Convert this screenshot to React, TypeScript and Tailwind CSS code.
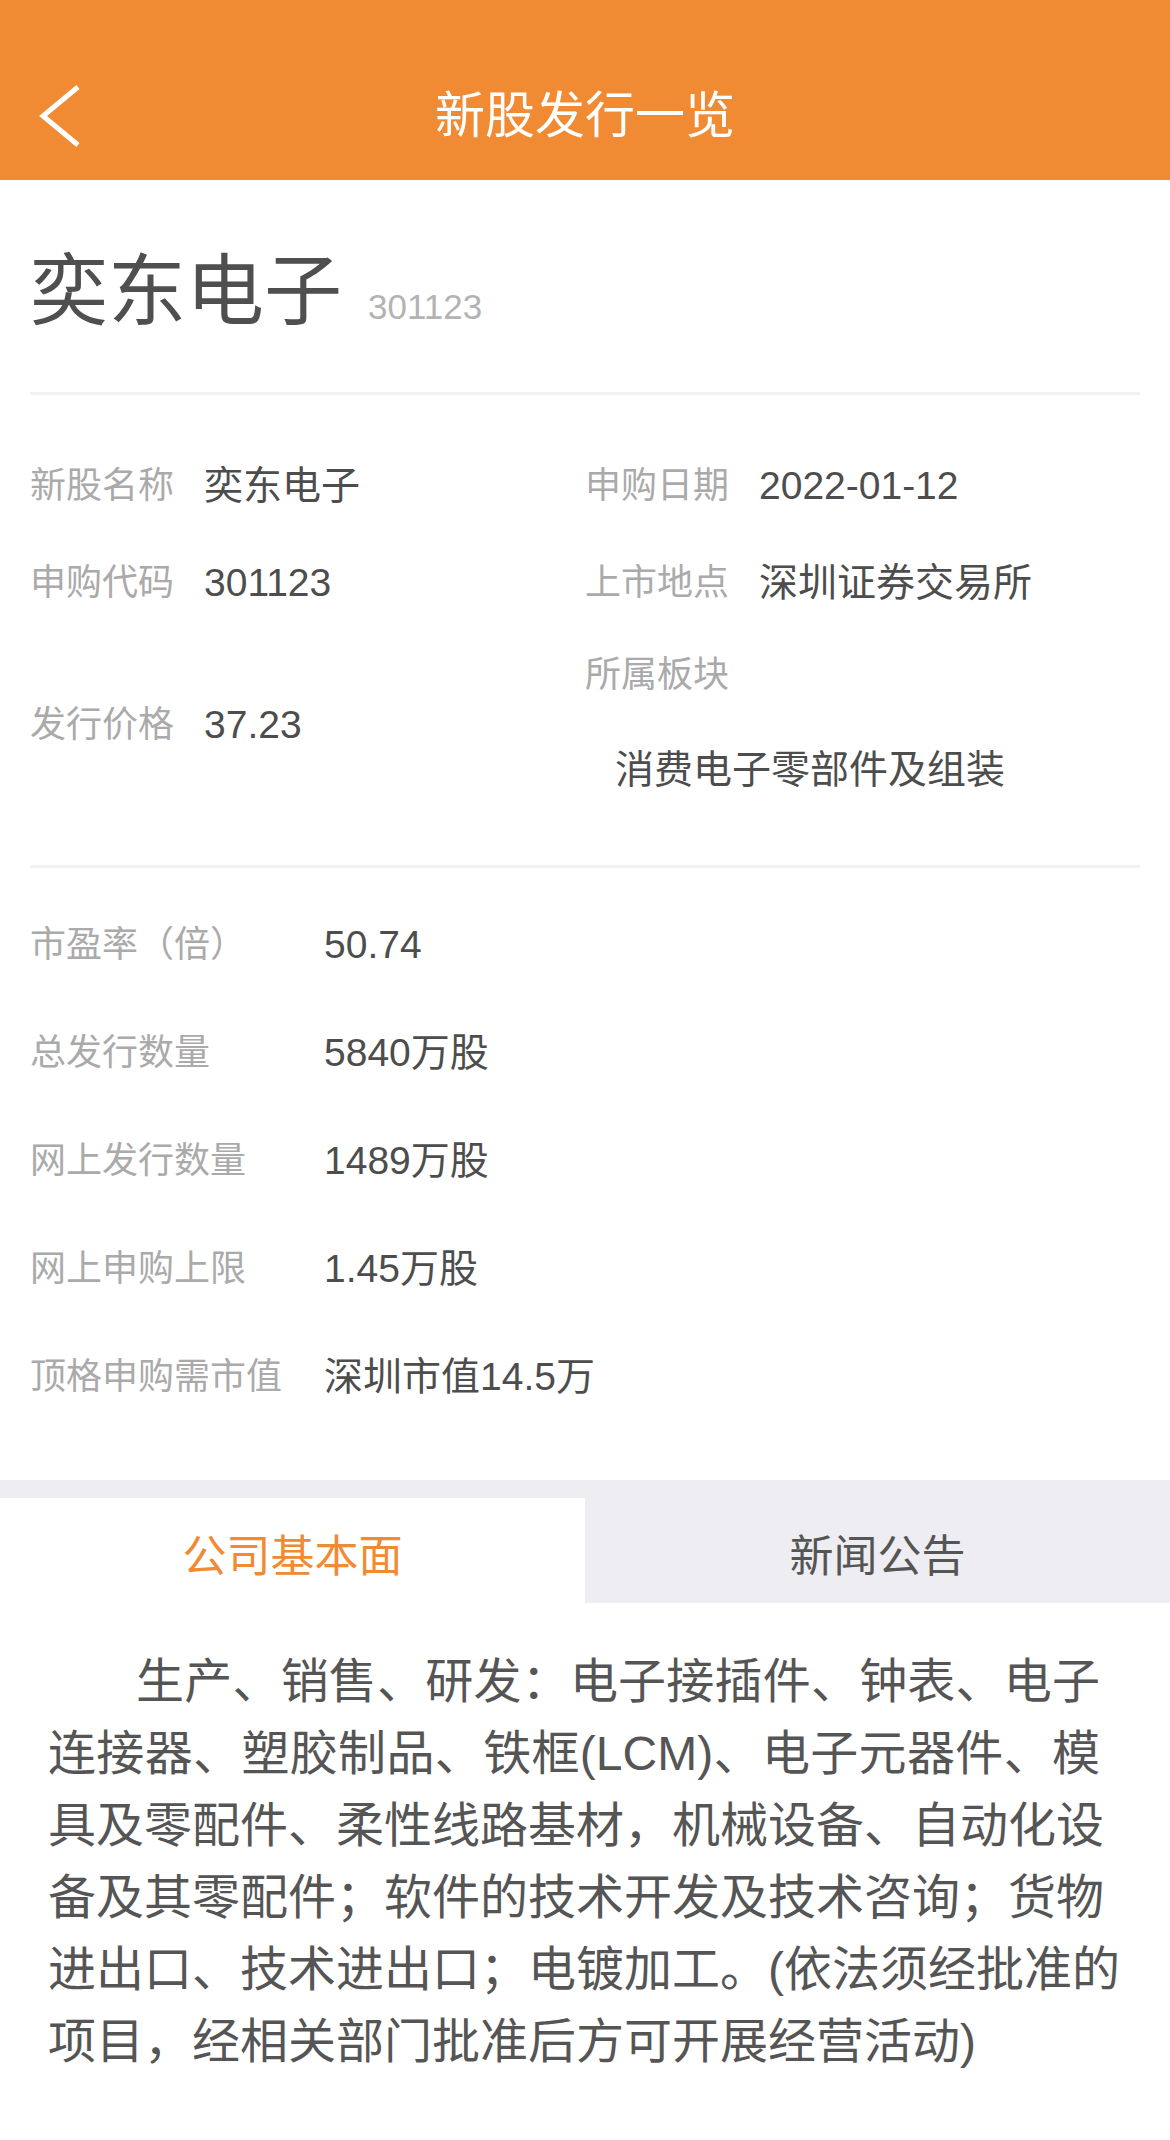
import React from "react";

const FONT = { fontFamily: '"Liberation Sans", "Noto Sans CJK SC", sans-serif' };

function Row({ label, value }: { label: string; value: string }) {
  return (
    <div className="flex h-[97px] items-center">
      <div className="w-[174px] shrink-0 text-[36px] leading-[40px] text-[#aaaaaa]">{label}</div>
      <div className="text-[39px] leading-[40px] text-[#4d4d4d]">{value}</div>
    </div>
  );
}

function StatRow({ label, value }: { label: string; value: string }) {
  return (
    <div className="flex h-[108px] items-center">
      <div className="w-[294px] shrink-0 text-[36px] leading-[40px] text-[#aaaaaa]">{label}</div>
      <div className="text-[39px] leading-[40px] text-[#4d4d4d]">{value}</div>
    </div>
  );
}

const lines = [
  "生产、销售、研发：电子接插件、钟表、电子",
  "连接器、塑胶制品、铁框(LCM)、电子元器件、模",
  "具及零配件、柔性线路基材，机械设备、自动化设",
  "备及其零配件；软件的技术开发及技术咨询；货物",
  "进出口、技术进出口；电镀加工。(依法须经批准的",
];

export default function App() {
  return (
    <div className="w-[1170px] bg-white" style={FONT}>
      {/* Header */}
      <div className="relative h-[180px] bg-[#F08A33] pt-[52px]">
        <svg
          className="absolute left-[36px] top-[82px] h-[68px] w-[48px]"
          viewBox="0 0 48 68"
          fill="none"
        >
          <polyline points="42,5 7,34 42,63" stroke="#ffffff" strokeWidth="5" />
        </svg>
        <div className="flex h-[128px] items-center justify-center text-[50px] leading-none text-white">
          新股发行一览
        </div>
      </div>

      {/* Title */}
      <div className="px-[30px]">
        <div className="flex items-baseline pt-[74px] pb-[47px]">
          <div className="text-[78px] leading-[76px] text-[#4f4f4f]">奕东电子</div>
          <div className="ml-[26px] text-[35px] leading-[76px] text-[#b3b3b3]">301123</div>
        </div>
        <div className="h-[3px] bg-[#F2F2F2]" />
      </div>

      {/* Info grid */}
      <div className="px-[30px]">
        <div className="grid grid-cols-2 pt-[42px] pb-[47px]">
          <div>
            <Row label="新股名称" value="奕东电子" />
            <Row label="申购代码" value="301123" />
            <div className="flex h-[187px] items-center">
              <div className="w-[174px] shrink-0 text-[36px] leading-[40px] text-[#aaaaaa]">发行价格</div>
              <div className="text-[39px] leading-[40px] text-[#4d4d4d]">37.23</div>
            </div>
          </div>
          <div>
            <Row label="申购日期" value="2022-01-12" />
            <Row label="上市地点" value="深圳证券交易所" />
            <div className="flex h-[187px] flex-col pt-[24px]">
              <div className="text-[36px] leading-[40px] text-[#aaaaaa]">所属板块</div>
              <div className="ml-[30px] mt-[55px] text-[39px] leading-[40px] text-[#4d4d4d]">
                消费电子零部件及组装
              </div>
            </div>
          </div>
        </div>
        <div className="h-[3px] bg-[#F2F2F2]" />
      </div>

      {/* Stats */}
      <div className="px-[30px] pt-[23px] pb-[49px]">
        <StatRow label="市盈率（倍）" value="50.74" />
        <StatRow label="总发行数量" value="5840万股" />
        <StatRow label="网上发行数量" value="1489万股" />
        <StatRow label="网上申购上限" value="1.45万股" />
        <StatRow label="顶格申购需市值" value="深圳市值14.5万" />
      </div>

      {/* Tabs */}
      <div className="bg-[#EEEDF2] pt-[18px]">
        <div className="flex h-[105px]">
          <div className="flex w-[585px] items-center justify-center bg-white pt-[12px] text-[44px] leading-none text-[#F08A33]">
            公司基本面
          </div>
          <div className="flex flex-1 items-center justify-center pt-[12px] text-[44px] leading-none text-[#555555]">
            新闻公告
          </div>
        </div>
      </div>

      {/* Paragraph */}
      <div className="pt-[43px] pb-[62px] pl-[48px]">
        <div className="w-[1052px] text-[48px] leading-[72px] text-[#555555]">
          {lines.map((l, i) => (
            <div
              key={i}
              className={`whitespace-nowrap text-justify [text-align-last:justify] ${i === 0 ? "pl-[88px]" : ""}`}
            >
              {l}
            </div>
          ))}
          <div className="whitespace-nowrap">项目，经相关部门批准后方可开展经营活动)</div>
        </div>
      </div>
    </div>
  );
}
